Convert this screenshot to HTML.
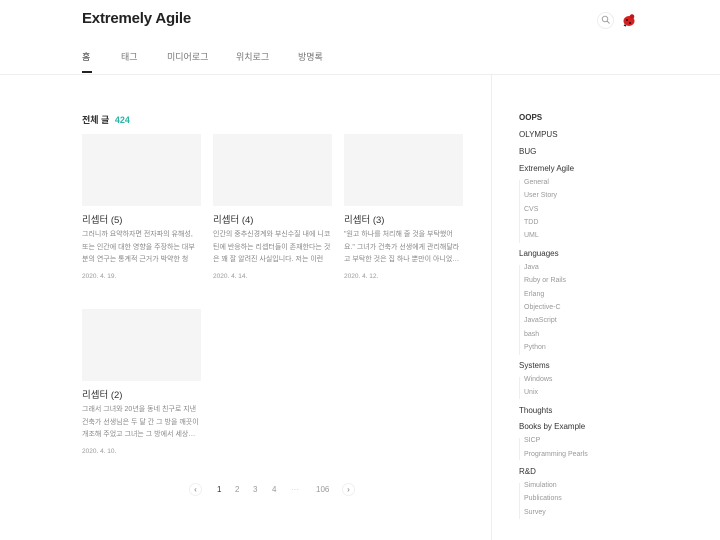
<!DOCTYPE html>
<html><head><meta charset="utf-8"><style>
*{margin:0;padding:0;box-sizing:border-box}
body{width:720px;height:540px;overflow:hidden;background:#fff;font-family:"Liberation Sans","Noto Sans CJK KR",sans-serif;position:relative;color:#333}
.a{position:absolute;white-space:nowrap}
.title{left:82px;top:10px;font-size:15px;font-weight:bold;color:#222;letter-spacing:-0.2px}
.nav{top:50px;font-size:9px;color:#777}
.hl{left:0;top:74px;width:720px;height:1px;background:#eee}
.vl{left:491px;top:74px;width:1px;height:466px;background:#eee}
.thumb{width:119px;height:72px;background:#f5f5f5}
.ct{font-size:9.5px;color:#333}
.ex{font-size:7px;color:#888;line-height:12.5px;width:119px;white-space:normal;overflow:hidden;height:37px}
.dt{font-size:6.5px;color:#999}
.s1{left:519px;font-size:8px;color:#333}
.s2{left:524px;font-size:7px;color:#999}
.bar{left:519px;width:1px;background:#eee}
.pg{top:485px;font-size:8px;color:#999}
.circ{top:483px;width:13px;height:13px;border-radius:50%;border:1px solid #f0f0f0;font-size:8px;color:#777;text-align:center;line-height:11px}
</style></head><body>
<div class="a title">Extremely Agile</div>
<div class="a" style="left:597px;top:12px;width:17px;height:17px;border:1px solid #eee;border-radius:50%"></div>
<svg class="a" style="left:601px;top:15px" width="10" height="10" viewBox="0 0 10 10"><circle cx="4" cy="4" r="2.8" fill="none" stroke="#999" stroke-width="0.9"/><path d="M6 6L8.5 8.5" stroke="#999" stroke-width="0.9"/></svg>
<svg class="a" style="left:621px;top:12px" width="16" height="16" viewBox="0 0 16 16"><ellipse cx="8" cy="9" rx="5.5" ry="5" fill="#d42020"/><circle cx="11" cy="4.5" r="2.3" fill="#c01818"/><circle cx="6" cy="8" r="1" fill="#300"/><circle cx="9" cy="11" r="1" fill="#300"/><path d="M3 13L5 14" stroke="#222" stroke-width="1.5"/></svg>
<div class="a nav" style="left:82px;color:#333">홈</div>
<div class="a" style="left:82px;top:71px;width:10px;height:2px;background:#222"></div>
<div class="a nav" style="left:121px">태그</div>
<div class="a nav" style="left:167px">미디어로그</div>
<div class="a nav" style="left:236px">위치로그</div>
<div class="a nav" style="left:298px">방명록</div>
<div class="a hl"></div><div class="a vl"></div>
<div class="a" style="left:82px;top:113px;font-size:9px;font-weight:bold;color:#333">전체 글 <span style="color:#2bb5a5;margin-left:3px">424</span></div>

<div class="a thumb" style="left:82px;top:134px"></div>
<div class="a ct" style="left:82px;top:212px">리셉터 (5)</div>
<div class="a ex" style="left:82px;top:229px">그러니까 요약하자면 전자파의 유해성, 또는 인간에 대한 영향을 주장하는 대부분의 연구는 통계적 근거가 박약한 청소…</div>
<div class="a dt" style="left:82px;top:273px">2020. 4. 19.</div>

<div class="a thumb" style="left:213px;top:134px"></div>
<div class="a ct" style="left:213px;top:212px">리셉터 (4)</div>
<div class="a ex" style="left:213px;top:229px">인간의 중추신경계와 부신수질 내에 니코틴에 반응하는 리셉터들이 존재한다는 것은 꽤 잘 알려진 사실입니다. 저는 이런 …</div>
<div class="a dt" style="left:213px;top:273px">2020. 4. 14.</div>

<div class="a thumb" style="left:344px;top:134px"></div>
<div class="a ct" style="left:344px;top:212px">리셉터 (3)</div>
<div class="a ex" style="left:344px;top:229px">"원고 하나를 처리해 줄 것을 부탁했어요." 그녀가 건축가 선생에게 관리해달라고 부탁한 것은 집 하나 뿐만이 아니었…</div>
<div class="a dt" style="left:344px;top:273px">2020. 4. 12.</div>

<div class="a thumb" style="left:82px;top:309px"></div>
<div class="a ct" style="left:82px;top:387px">리셉터 (2)</div>
<div class="a ex" style="left:82px;top:404px">그래서 그녀와 20년을 동네 친구로 지낸 건축가 선생님은 두 달 간 그 방을 깨끗이 개조해 주었고 그녀는 그 방에서 세상…</div>
<div class="a dt" style="left:82px;top:448px">2020. 4. 10.</div>

<div class="a circ" style="left:189px">‹</div>
<div class="a pg" style="left:217px;color:#333">1</div>
<div class="a pg" style="left:235px">2</div>
<div class="a pg" style="left:253px">3</div>
<div class="a pg" style="left:272px">4</div>
<div class="a pg" style="left:291px;color:#ccc">···</div>
<div class="a pg" style="left:316px">106</div>
<div class="a circ" style="left:342px">›</div>

<div class="a s1" style="top:113px;font-weight:bold">OOPS</div>
<div class="a s1" style="top:130px">OLYMPUS</div>
<div class="a s1" style="top:147px">BUG</div>
<div class="a s1" style="top:164px">Extremely Agile</div>
<div class="a bar" style="top:180px;height:63px"></div>
<div class="a s2" style="top:179px">General</div>
<div class="a s2" style="top:192px">User Story</div>
<div class="a s2" style="top:206px">CVS</div>
<div class="a s2" style="top:219px">TDD</div>
<div class="a s2" style="top:232px">UML</div>
<div class="a s1" style="top:249px">Languages</div>
<div class="a bar" style="top:265px;height:90px"></div>
<div class="a s2" style="top:264px">Java</div>
<div class="a s2" style="top:277px">Ruby or Rails</div>
<div class="a s2" style="top:291px">Erlang</div>
<div class="a s2" style="top:304px">Objective-C</div>
<div class="a s2" style="top:317px">JavaScript</div>
<div class="a s2" style="top:331px">bash</div>
<div class="a s2" style="top:344px">Python</div>
<div class="a s1" style="top:361px">Systems</div>
<div class="a bar" style="top:377px;height:22px"></div>
<div class="a s2" style="top:376px">Windows</div>
<div class="a s2" style="top:389px">Unix</div>
<div class="a s1" style="top:406px">Thoughts</div>
<div class="a s1" style="top:422px">Books by Example</div>
<div class="a bar" style="top:438px;height:22px"></div>
<div class="a s2" style="top:437px">SICP</div>
<div class="a s2" style="top:451px">Programming Pearls</div>
<div class="a s1" style="top:467px">R&amp;D</div>
<div class="a bar" style="top:483px;height:36px"></div>
<div class="a s2" style="top:482px">Simulation</div>
<div class="a s2" style="top:495px">Publications</div>
<div class="a s2" style="top:509px">Survey</div>
</body></html>
